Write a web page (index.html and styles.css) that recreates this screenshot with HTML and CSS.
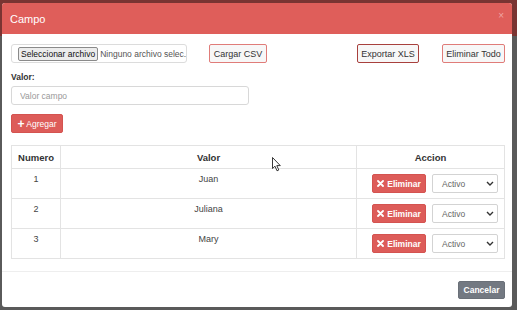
FILE: index.html
```html
<!DOCTYPE html>
<html>

<head>
  <meta charset="utf-8" />
  <title>Campo</title>
  <link rel="stylesheet" href="styles.css">
</head>

<body>
  <div class="modal">
    <div class="modal-header">
      <h4>Campo</h4>
      <span class="close">×</span>
    </div>

    <div class="modal-body">
      <div class="toolbar">
        <div class="file-box">
          <span class="file-btn">Seleccionar archivo</span>
          <span class="file-name">Ninguno archivo selec.</span>
        </div>
        <button class="btn btn-line btn-csv">Cargar CSV</button>
        <button class="btn btn-line btn-xls">Exportar XLS</button>
        <button class="btn btn-line btn-all">Eliminar Todo</button>
      </div>

      <label class="field-label">Valor:</label>
      <input class="field" type="text" placeholder="Valor campo">
      <button class="btn btn-red btn-add"><b>+</b> Agregar</button>

      <table class="grid">
        <thead>
          <tr>
            <th class="col-num">Numero</th>
            <th class="col-val">Valor</th>
            <th class="col-act">Accion</th>
          </tr>
        </thead>
        <tbody>
          <tr>
            <td>1</td>
            <td>Juan</td>
            <td>
              <div class="actions">
                <button class="btn btn-red btn-del">
                  <svg width="7" height="7" viewBox="0 0 7 7"><path d="M1 1L6 6M6 1L1 6" stroke="#fff" stroke-width="1.8" stroke-linecap="round"/></svg>
                  Eliminar
                </button>
                <div class="select">Activo
                  <svg width="8" height="5" viewBox="0 0 8 5"><path d="M1 1L4 4L7 1" fill="none" stroke="#333" stroke-width="1.4"/></svg>
                </div>
              </div>
            </td>
          </tr>
          <tr>
            <td>2</td>
            <td>Juliana</td>
            <td>
              <div class="actions">
                <button class="btn btn-red btn-del">
                  <svg width="7" height="7" viewBox="0 0 7 7"><path d="M1 1L6 6M6 1L1 6" stroke="#fff" stroke-width="1.8" stroke-linecap="round"/></svg>
                  Eliminar
                </button>
                <div class="select">Activo
                  <svg width="8" height="5" viewBox="0 0 8 5"><path d="M1 1L4 4L7 1" fill="none" stroke="#333" stroke-width="1.4"/></svg>
                </div>
              </div>
            </td>
          </tr>
          <tr>
            <td>3</td>
            <td>Mary</td>
            <td>
              <div class="actions">
                <button class="btn btn-red btn-del">
                  <svg width="7" height="7" viewBox="0 0 7 7"><path d="M1 1L6 6M6 1L1 6" stroke="#fff" stroke-width="1.8" stroke-linecap="round"/></svg>
                  Eliminar
                </button>
                <div class="select">Activo
                  <svg width="8" height="5" viewBox="0 0 8 5"><path d="M1 1L4 4L7 1" fill="none" stroke="#333" stroke-width="1.4"/></svg>
                </div>
              </div>
            </td>
          </tr>
        </tbody>
      </table>
    </div>

    <div class="modal-footer">
      <button class="btn btn-gray">Cancelar</button>
    </div>
  </div>

  <!--mouse pointer-->
  <svg class="pointer" width="10" height="15" viewBox="0 0 10 15">
    <path d="M0.5 0.5L0.5 11.5L3 9.2L5 13.8L6.8 13L4.8 8.6L8.3 8.6Z" fill="#fff" stroke="#222" stroke-width="0.9"/>
  </svg>
</body>

</html>
```

FILE: styles.css
```css
* {
  box-sizing: border-box;
}

body {
  margin: 0;
  height: 310px;
  overflow: hidden;
  background: linear-gradient(to bottom, #7a3432 0, #7a3432 36px, #5a5a5a 36px);
  font-family: "Liberation Sans", Arial, sans-serif;
  color: #333;
}

.modal {
  width: 510px;
  margin: 3px 0 0 2px;
  background: white;
  border-radius: 3px;
  overflow: hidden;
}

.modal-header {
  height: 31px;
  background: #df5e5a;
  display: flex;
  align-items: center;
  justify-content: space-between;
  padding: 0 8px 0 8px;
}

.modal-header h4 {
  margin: 0;
  font-size: 11px;
  font-weight: normal;
  color: white;
}

.modal-header .close {
  font-size: 10px;
  color: #f0a5a3;
  margin-top: -6px;
}

.modal-body {
  padding: 10px 7px 12px 9px;
}

.toolbar {
  display: flex;
  height: 19px;
}

.file-box {
  width: 176px;
  flex-shrink: 0;
  display: flex;
  align-items: center;
  white-space: nowrap;
  border: 1px solid #dcdcdc;
  border-radius: 3px;
  padding: 0 4px 0 6px;
  font-size: 8.5px;
  overflow: hidden;
}

.file-btn {
  background: #ececec;
  border: 1px solid #8a8a8a;
  border-radius: 2px;
  padding: 1px 2px;
  color: #111;
  line-height: 10px;
}

.file-name {
  margin-left: 2px;
  color: #555;
}

.btn {
  font-family: "Liberation Sans", Arial, sans-serif;
  font-size: 9px;
  height: 19px;
  border-radius: 2px;
  cursor: pointer;
  padding: 0;
  white-space: nowrap;
}

.btn-line {
  flex-shrink: 0;
  background: #f7f7f7;
  border: 1px solid #e07c79;
  color: #333;
}

.btn-csv {
  width: 58px;
  margin-left: 22px;
}

.btn-xls {
  width: 62px;
  margin-left: auto;
  border-color: #a8403d;
}

.btn-all {
  width: 63px;
  margin-left: 23px;
}

.field-label {
  display: block;
  margin-top: 8px;
  font-size: 8.5px;
  font-weight: bold;
  line-height: 13px;
}

.field {
  display: block;
  width: 238px;
  height: 19px;
  margin-top: 2px;
  border: 1px solid #d8d8d8;
  border-radius: 3px;
  padding: 0 8px;
  font-size: 8.5px;
  font-family: "Liberation Sans", Arial, sans-serif;
}

.field::placeholder {
  color: #999;
}

.btn-red {
  background: #dd5c59;
  border: 1px solid #d45350;
  color: white;
}

.btn-add {
  display: block;
  width: 52px;
  margin-top: 9px;
  font-size: 8.5px;
}

.btn-add b {
  font-size: 12px;
  line-height: 8px;
  vertical-align: -1px;
}

.grid {
  width: 494px;
  margin-top: 12px;
  border-collapse: collapse;
  border: 1px solid #e3e3e3;
  font-size: 9px;
}

.grid th {
  height: 23px;
  font-size: 9.5px;
  font-weight: bold;
  color: #333;
  border: 1px solid #e3e3e3;
}

.grid td {
  height: 30px;
  text-align: center;
  vertical-align: top;
  padding: 5px 0 0 0;
  color: #444;
  border: 1px solid #e3e3e3;
}

.col-num {
  width: 49px;
}

.col-act {
  width: 148px;
}

.grid tr td:last-child {
  padding: 5px 5px 0 15px;
}

.actions {
  display: flex;
  gap: 6px;
}

.btn-del {
  width: 54px;
  font-weight: bold;
  font-size: 8.5px;
  display: flex;
  align-items: center;
  justify-content: center;
  gap: 3px;
}

.select {
  width: 66px;
  height: 19px;
  border: 1px solid #d3d3d3;
  border-radius: 2px;
  display: flex;
  align-items: center;
  justify-content: space-between;
  padding: 0 3px 0 9px;
  font-size: 8.5px;
  color: #666;
}

.modal-footer {
  border-top: 1px solid #eeeeee;
  padding: 9px 7px 8px 0;
  display: flex;
  justify-content: flex-end;
}

.btn-gray {
  width: 47px;
  height: 18px;
  background: #737982;
  border: 1px solid #6a7078;
  color: white;
  font-weight: bold;
  font-size: 8.5px;
}

.pointer {
  position: absolute;
  left: 272px;
  top: 157px;
}
```
